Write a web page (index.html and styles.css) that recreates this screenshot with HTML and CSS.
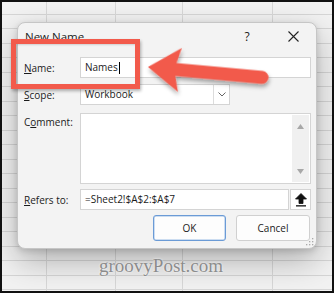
FILE: index.html
```html
<!DOCTYPE html>
<html>
<head>
<meta charset="utf-8">
<link rel="stylesheet" href="styles.css">
</head>
<body>
<div class="frame">
  <div class="dialog">
    <div class="titlebar">
      <span class="title">New Name</span>
      <span class="tbtn help">?</span>
      <span class="tbtn close">
        <svg width="11" height="11" viewBox="0 0 11 11"><path d="M0.5 0.5 L10.5 10.5 M10.5 0.5 L0.5 10.5" stroke="#222" stroke-width="1.1"/></svg>
      </span>
    </div>
    <div class="body">
      <div class="row r-name">
        <label class="lbl"><u>N</u>ame:</label>
        <div class="field">Names<span class="caret"></span></div>
      </div>
      <div class="row r-scope">
        <label class="lbl"><u>S</u>cope:</label>
        <div class="select">
          <span class="select-text">Workbook</span>
          <span class="select-arrow">
            <svg width="8" height="5" viewBox="0 0 8 5"><path d="M0.5 0.5 L4 4 L7.5 0.5" fill="none" stroke="#666" stroke-width="1"/></svg>
          </span>
        </div>
      </div>
      <div class="row r-comment">
        <label class="lbl top">C<u>o</u>mment:</label>
        <div class="textarea">
          <div class="scrollbar">
            <svg width="7" height="5" viewBox="0 0 7 5"><path d="M0 5 L3.5 0 L7 5 Z" fill="#a8a8a8"/></svg>
            <svg width="7" height="5" viewBox="0 0 7 5"><path d="M0 0 L3.5 5 L7 0 Z" fill="#a8a8a8"/></svg>
          </div>
        </div>
      </div>
      <div class="row r-refers">
        <label class="lbl"><u>R</u>efers to:</label>
        <div class="field refers">=Sheet2!$A$2:$A$7</div>
        <div class="pick">
          <svg width="12" height="14" viewBox="0 0 12 14"><path d="M6 0.5 L11.5 6 L8 6 L8 10.5 L4 10.5 L4 6 L0.5 6 Z" fill="#111" stroke="#111" stroke-width="0.8" stroke-linejoin="round"/><rect x="1" y="12.2" width="10" height="1.3" fill="#111"/></svg>
        </div>
      </div>
      <div class="row r-buttons">
        <div class="btn ok">OK</div>
        <div class="btn">Cancel</div>
      </div>
    </div>
    <svg class="grip" width="8" height="8" viewBox="0 0 8 8">
      <rect x="6" y="0" width="1.3" height="1.3" fill="#aaa"/>
      <rect x="3" y="3" width="1.3" height="1.3" fill="#aaa"/>
      <rect x="6" y="3" width="1.3" height="1.3" fill="#aaa"/>
      <rect x="0" y="6" width="1.3" height="1.3" fill="#aaa"/>
      <rect x="3" y="6" width="1.3" height="1.3" fill="#aaa"/>
      <rect x="6" y="6" width="1.3" height="1.3" fill="#aaa"/>
    </svg>
  </div>
  <div class="watermark">groovyPost.com</div>
  <div class="highlight"></div>
  <svg class="arrow" width="334" height="293" viewBox="0 0 334 293">
    <defs>
      <filter id="sh" x="-20%" y="-40%" width="140%" height="180%">
        <feDropShadow dx="1" dy="3" stdDeviation="2" flood-color="#000" flood-opacity="0.35"/>
      </filter>
    </defs>
    <g transform="translate(148 67) rotate(5.2)" filter="url(#sh)">
      <path d="M0 0 L32 -22 L28 -6.5 L114.5 -6.5 A6.5 6.5 0 0 1 114.5 6.5 L28 6.5 L32 22 Z" fill="#f25a4b"/>
    </g>
  </svg>
</div>
</body>
</html>
```

FILE: styles.css
```css
html, body {
  margin: 0;
  padding: 0;
  background: #111;
}

.frame {
  position: relative;
  width: 334px;
  height: 293px;
  box-sizing: border-box;
  padding: 22px 0 0 17px;
  overflow: hidden;
  background-color: #f2f2f2;
  background-image:
    linear-gradient(to right, transparent 46px, #d8d8d8 46px, #d8d8d8 47px, transparent 47px),
    linear-gradient(to right, transparent 115px, #d8d8d8 115px, #d8d8d8 116px, transparent 116px),
    linear-gradient(to right, transparent 182px, #d8d8d8 182px, #d8d8d8 183px, transparent 183px),
    linear-gradient(to right, transparent 272px, #d8d8d8 272px, #d8d8d8 273px, transparent 273px),
    repeating-linear-gradient(to bottom, transparent 0, transparent 13.5px, #d6d6d6 13.5px, #d6d6d6 14.5px);
  font-family: "Open Sans", "Noto Sans", sans-serif;
  color: #1b1b1b;
}

.frame::after {
  content: "";
  position: absolute;
  inset: 0;
  border: 2px solid #111;
  pointer-events: none;
}

.dialog {
  position: relative;
  width: 300px;
  height: 227px;
  box-sizing: border-box;
  background: #f3f3f3;
  border: 1px solid #c6c6c6;
  border-radius: 8px;
  box-shadow: 0 12px 32px rgba(0, 0, 0, 0.28), 0 2px 6px rgba(0, 0, 0, 0.14);
}

.titlebar {
  display: flex;
  align-items: center;
  height: 26px;
  padding-left: 7px;
}

.title {
  flex: 1;
  font-size: 11.5px;
  margin-top: 1px;
}

.tbtn {
  width: 46px;
  display: flex;
  justify-content: center;
  align-items: center;
  height: 26px;
}

.help {
  font-size: 12px;
}

.body {
  padding: 8px 5px 0 6px;
}

.row {
  display: flex;
  align-items: center;
}

.lbl {
  width: 56px;
  flex: none;
  font-size: 10px;
  line-height: 14px;
}

.lbl u {
  text-decoration-thickness: 1px;
  text-underline-offset: 1px;
}

.lbl.top {
  align-self: flex-start;
  padding-top: 2px;
}

.field {
  flex: 1;
  height: 21px;
  box-sizing: border-box;
  background: #fff;
  border: 1px solid #d4d4d4;
  font-size: 10px;
  line-height: 19px;
  padding-left: 4px;
  display: flex;
  align-items: center;
}

.caret {
  display: inline-block;
  width: 1px;
  height: 12px;
  background: #000;
  margin-left: 1px;
}

.r-scope {
  margin-top: 6px;
}

.select {
  width: 150px;
  height: 21px;
  box-sizing: border-box;
  background: #fff;
  border: 1px solid #d4d4d4;
  display: flex;
  font-size: 10px;
}

.select-text {
  flex: 1;
  padding-left: 4px;
  line-height: 19px;
}

.select-arrow {
  width: 15px;
  border-left: 1px solid #dcdcdc;
  display: flex;
  align-items: center;
  justify-content: center;
}

.r-comment {
  margin-top: 8px;
}

.textarea {
  flex: 1;
  height: 71px;
  box-sizing: border-box;
  background: #fff;
  border: 1px solid #d4d4d4;
  display: flex;
  justify-content: flex-end;
  padding: 1px 1px 1px 0;
}

.scrollbar {
  width: 17px;
  background: #f0f0f0;
  display: flex;
  flex-direction: column;
  align-items: center;
  justify-content: space-between;
  padding: 9px 0 8px;
  box-sizing: border-box;
}

.r-refers {
  margin-top: 5px;
}

.refers {
  padding-left: 4px;
}

.pick {
  width: 21px;
  height: 21px;
  box-sizing: border-box;
  margin-left: 1px;
  background: #fff;
  border: 1px solid #d4d4d4;
  display: flex;
  align-items: center;
  justify-content: center;
}

.r-buttons {
  margin-top: 5px;
  justify-content: flex-end;
  gap: 10px;
  padding-right: 1px;
}

.btn {
  width: 74px;
  height: 26px;
  box-sizing: border-box;
  background: #fdfdfd;
  border: 1px solid #d0d0d0;
  border-radius: 3px;
  font-size: 10px;
  display: flex;
  align-items: center;
  justify-content: center;
}

.btn.ok {
  width: 73px;
  border-color: #6b9bd6;
  box-shadow: inset 0 0 0 0.5px #9bbde6;
}

.grip {
  position: absolute;
  right: 2px;
  bottom: 2px;
}

.watermark {
  position: absolute;
  left: 99px;
  top: 255px;
  font-family: "Liberation Serif", "Times New Roman", serif;
  font-size: 19px;
  color: #8c8c8c;
  text-shadow: 0 0 2px #fff;
}

.highlight {
  position: absolute;
  left: 11px;
  top: 39px;
  width: 129px;
  height: 50px;
  box-sizing: border-box;
  border: 5px solid #f25a4b;
  box-shadow: 1px 2px 3px rgba(0, 0, 0, 0.3), inset 1px 1px 2px rgba(0, 0, 0, 0.15);
}

.arrow {
  position: absolute;
  left: 0;
  top: 0;
  pointer-events: none;
}
```
